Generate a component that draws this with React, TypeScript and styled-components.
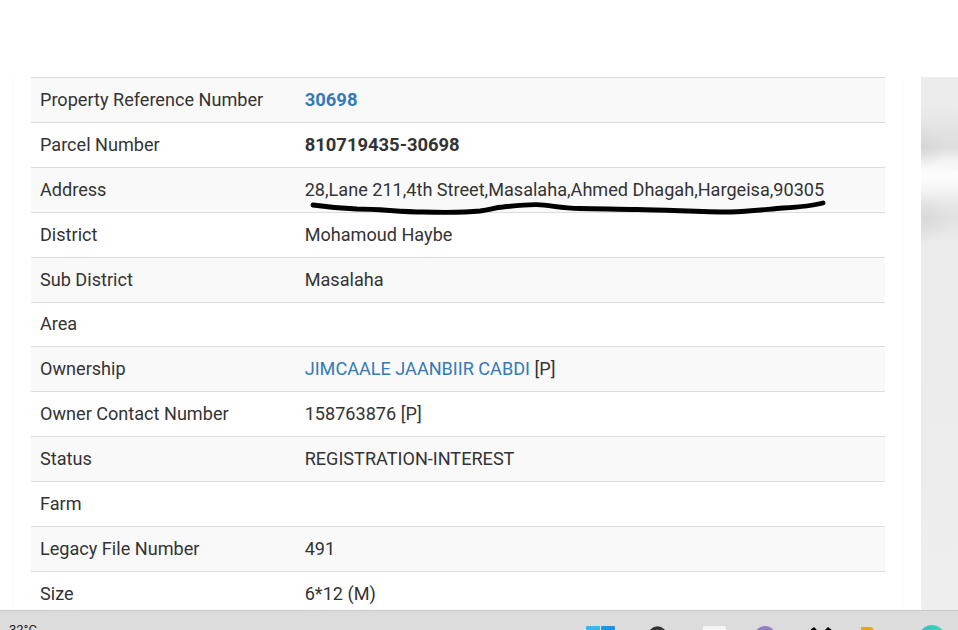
import React from "react";
import styled, { createGlobalStyle } from "styled-components";

const Global = createGlobalStyle`
  html, body { margin: 0; padding: 0; background: #fff; }
  body { width: 958px; height: 630px; overflow: hidden; font-family: Roboto, "Liberation Sans", sans-serif; }
`;

const Screen = styled.div`
  width: 958px;
  height: 630px;
  display: flex;
  flex-direction: column;
  overflow: hidden;
`;

const Page = styled.main`
  position: relative;
  flex: 0 0 610px;
  height: 610px;
  overflow: hidden;
  display: flex;
  padding: 77px 0 0 31px;
  box-sizing: border-box;
  background: #fff;
  &::before {
    content: "";
    position: absolute;
    left: 12px;
    top: 77px;
    bottom: 0;
    width: 1px;
    background: #fafafa;
  }
`;

const Table = styled.section`
  width: 854px;
  flex: none;
  display: flex;
  flex-direction: column;
`;

const Row = styled.div<{ $odd: boolean }>`
  flex: 0 0 44.91px;
  height: 44.91px;
  box-sizing: border-box;
  border-top: 1px solid #dddddd;
  padding-bottom: 1.05px;
  background: ${(p) => (p.$odd ? "#f9f9f9" : "#ffffff")};
  display: grid;
  grid-template-columns: 273.7px 1fr;
  align-items: center;
  font-size: 18.1px;
  color: #333333;
`;

const Label = styled.div`
  padding-left: 9px;
`;

const Value = styled.div<{ $bold?: boolean }>`
  font-weight: ${(p) => (p.$bold ? 700 : 400)};
  font-size: ${(p) => (p.$bold ? "18.4px" : "inherit")};
`;

const Link = styled.a<{ $bold?: boolean }>`
  color: #337ab7;
  text-decoration: none;
  font-weight: ${(p) => (p.$bold ? 700 : 400)};
  font-size: ${(p) => (p.$bold ? "18.4px" : "inherit")};
`;

const Gutter = styled.div`
  flex: none;
  width: 36px;
  position: relative;
  &::after {
    content: "";
    position: absolute;
    left: 17px;
    top: 0;
    bottom: 0;
    width: 1px;
    background: #fafafa;
  }
`;

const BlurPanel = styled.aside`
  flex: none;
  width: 37px;
  background:
    radial-gradient(ellipse 26px 22px at 0px 70px, rgba(208, 208, 208, 0.55), transparent),
    radial-gradient(ellipse 26px 24px at 4px 142px, rgba(212, 212, 212, 0.6), transparent),
    linear-gradient(
      180deg,
      #ececec 0,
      #ebebeb 30px,
      #e0e0e0 62px,
      #dddddd 70px,
      #f3f3f3 84px,
      #fdfdfd 97px,
      #f8f8f8 108px,
      #e6e6e6 128px,
      #e2e2e2 142px,
      #ebebeb 165px,
      #eeeeee 100%
    );
`;

const Underline = styled.svg`
  position: absolute;
  left: 305px;
  top: 195px;
  width: 525px;
  height: 25px;
  pointer-events: none;
`;

const Taskbar = styled.footer`
  flex: 0 0 20px;
  height: 20px;
  box-sizing: border-box;
  border-top: 1px solid #c9c9c9;
  background: #dcdcdc;
  display: flex;
  overflow: hidden;
  padding-left: 9px;
`;

const Weather = styled.span`
  flex: 0 0 31px;
  font-size: 13px;
  line-height: 15px;
  color: #222;
  padding-top: 11px;
  height: 26px;
`;

const TrayIcon = styled.svg<{ $x: number; $w: number; $y: number }>`
  flex: none;
  width: ${(p) => p.$w}px;
  height: 26px;
  margin-left: ${(p) => p.$x}px;
  margin-top: ${(p) => p.$y}px;
`;

const rows: { label: string; value?: string; tag?: string; link?: boolean; bold?: boolean }[] = [
  { label: "Property Reference Number", value: "30698", link: true, bold: true },
  { label: "Parcel Number", value: "810719435-30698", bold: true },
  { label: "Address", value: "28,Lane 211,4th Street,Masalaha,Ahmed Dhagah,Hargeisa,90305" },
  { label: "District", value: "Mohamoud Haybe" },
  { label: "Sub District", value: "Masalaha" },
  { label: "Area" },
  { label: "Ownership", value: "JIMCAALE JAANBIIR CABDI", link: true, tag: " [P]" },
  { label: "Owner Contact Number", value: "158763876 [P]" },
  { label: "Status", value: "REGISTRATION-INTEREST" },
  { label: "Farm" },
  { label: "Legacy File Number", value: "491" },
  { label: "Size", value: "6*12 (M)" },
];

export default function App() {
  return (
    <Screen>
      <Global />
      <Page>
        <Table>
          {rows.map((r, i) => (
            <Row key={r.label} $odd={i % 2 === 0}>
              <Label>{r.label}</Label>
              <Value $bold={r.bold && !r.link}>
                {r.link ? (
                  <Link href="#" $bold={r.bold}>
                    {r.value}
                  </Link>
                ) : (
                  r.value
                )}
                {r.tag}
              </Value>
            </Row>
          ))}
        </Table>
        <Gutter />
        <BlurPanel />
        <Underline viewBox="0 0 525 25">
          <path
            d="M8 10 C22 12 38 13.5 52 14 C75 14 95 17 118 17 C140 17.5 160 17.5 175 16 C186 14.5 190 12.5 198 12 C212 10.5 222 9.5 232 9.7 C245 10 255 13 275 13.5 C295 14 315 14 332 14.5 C365 15 395 17 425 17 C445 16.5 460 14.5 478 13 C495 12 507 11 518 8"
            fill="none"
            stroke="#000"
            strokeWidth="4.8"
            strokeLinecap="round"
          />
        </Underline>
      </Page>
      <Taskbar>
        <Weather>32°C</Weather>
        <TrayIcon $x={546} $w={29} $y={15} viewBox="0 0 29 26">
          <rect x="0" y="0" width="14" height="13" rx="1" fill="#3fb4f3" />
          <rect x="15" y="0" width="14" height="13" rx="1" fill="#1f93e4" />
        </TrayIcon>
        <TrayIcon $x={33} $w={19} $y={15} viewBox="0 0 19 26">
          <circle cx="9.5" cy="9.5" r="7.5" fill="none" stroke="#333" strokeWidth="3.5" />
        </TrayIcon>
        <TrayIcon $x={36} $w={23} $y={15} viewBox="0 0 23 26">
          <rect x="0" y="0" width="23" height="24" rx="1" fill="#f4f4f4" />
        </TrayIcon>
        <TrayIcon $x={28} $w={22} $y={15} viewBox="0 0 22 26">
          <circle cx="11" cy="11" r="11" fill="#9180c8" />
        </TrayIcon>
        <TrayIcon $x={33} $w={24} $y={16} viewBox="0 0 24 26">
          <path d="M0 4 L5 0 L9 4 L5 9Z M15 4 L19 0 L24 4 L19 9Z" fill="#000" />
        </TrayIcon>
        <TrayIcon $x={28} $w={13} $y={16} viewBox="0 0 13 26">
          <path d="M0 0 H8 Q13 0 13 5 V20 H0Z" fill="#e6a514" />
        </TrayIcon>
        <TrayIcon $x={45} $w={26} $y={14} viewBox="0 0 26 26">
          <defs>
            <linearGradient id="teal" x1="0" y1="1" x2="1" y2="0">
              <stop offset="0" stopColor="#2b9fe0" />
              <stop offset="1" stopColor="#3fdcb0" />
            </linearGradient>
          </defs>
          <circle cx="13" cy="13" r="13" fill="url(#teal)" />
        </TrayIcon>
      </Taskbar>
    </Screen>
  );
}
